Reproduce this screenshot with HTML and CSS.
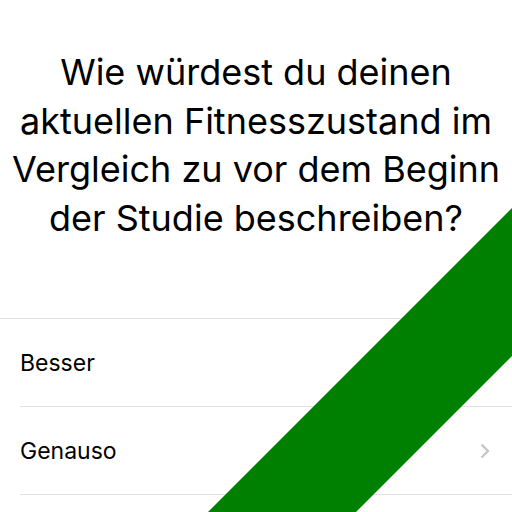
FILE: index.html
```html
<!DOCTYPE html>
<html lang="de">
<head>
<meta charset="utf-8">
<link rel="stylesheet" href="styles.css">
</head>
<body>
<div class="page">
  <h1 class="question">Wie würdest du deinen aktuellen Fitnesszustand im Vergleich zu vor dem Beginn der Studie beschreiben?</h1>
  <ul class="options">
    <li class="option"><span>Besser</span></li>
    <li class="option"><span>Genauso</span>
      <svg class="chev" width="10" height="16" viewBox="0 0 10 16"><path d="M1.5 1.5 L8 8 L1.5 14.5" fill="none" stroke="#c4c4c7" stroke-width="2.2"/></svg>
    </li>
  </ul>
</div>
<svg class="band" width="512" height="512" viewBox="0 0 512 512"><polygon points="208,512 512,208 512,356 356,512" fill="#008000"/></svg>
</body>
</html>
```
FILE: styles.css
```css
html, body {
  margin: 0;
  padding: 0;
  background: #fff;
  overflow: hidden;
}
body {
  width: 512px;
  height: 512px;
  position: relative;
  font-family: Inter, "Noto Sans", sans-serif;
  color: #000;
}
.page {
  padding-top: 48px;
}
.question {
  margin: 0;
  padding: 0 8px;
  font-size: 36px;
  line-height: 48.5px;
  font-weight: 400;
  text-align: center;
  letter-spacing: 0;
}
.options {
  list-style: none;
  margin: 76px 0 0 0;
  padding: 0;
  border-top: 1px solid #e3e3e5;
}
.option {
  margin-left: 20px;
  height: 87px;
  display: flex;
  align-items: center;
  justify-content: space-between;
  padding-right: 22px;
  border-bottom: 1px solid #e3e3e5;
  font-size: 23px;
}
.chev {
  display: block;
}
.band {
  position: absolute;
  left: 0;
  top: 0;
}
```
